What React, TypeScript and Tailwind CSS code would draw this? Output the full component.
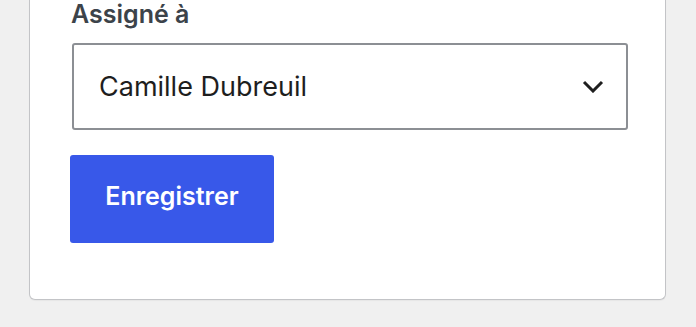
import { useState } from "react";

function Chevron() {
  return (
    <svg width="22" height="13" viewBox="0 0 22 13" fill="none" className="shrink-0">
      <path d="M2 2l9 9 9-9" stroke="#1e1e1e" strokeWidth="3" />
    </svg>
  );
}

export default function App() {
  const [assignee] = useState("Camille Dubreuil");

  return (
    <div
      className="min-h-[327px] w-full bg-[#f0f0f0] pl-[29px] pr-[30px]"
      style={{ fontFamily: "Inter, 'Noto Sans', sans-serif" }}
    >
      <div className="rounded-b-[6px] border border-t-0 border-[#c3c4c7] bg-white pl-[40px] pr-[37px] pb-[56px] shadow-[0_1px_1px_rgba(0,0,0,0.04)]">
        <label className="ml-[1px] block text-[25px] font-semibold leading-[28px] text-[#3c434a]">
          Assigné à
        </label>
        <div className="mt-[15px] ml-[2px] flex h-[87px] items-center justify-between rounded-[3px] border-2 border-[#8c8f94] bg-white pl-[25px] pr-[22px]">
          <span className="text-[27px] leading-none text-[#1e1e1e]">{assignee}</span>
          <Chevron />
        </div>
        <button
          type="button"
          className="mt-[25px] flex h-[88px] w-[204px] items-center justify-center rounded-[3px] bg-[#3858e9] pb-[4px] text-[25px] font-semibold text-white"
        >
          Enregistrer
        </button>
      </div>
    </div>
  );
}
